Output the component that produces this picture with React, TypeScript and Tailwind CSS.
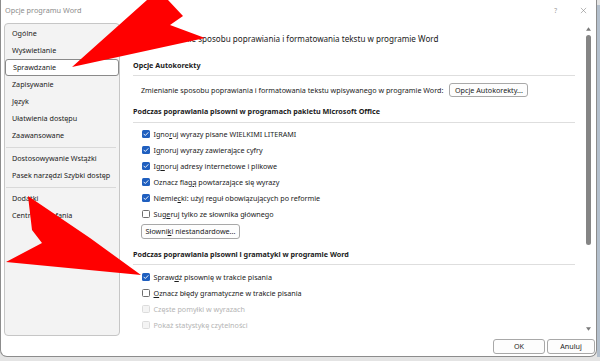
import React from "react";

function Check() {
  return (
    <svg viewBox="0 0 8 8" className="w-[8px] h-[8px]">
      <path d="M1.9 4.1 L3.3 5.5 L6.1 2.6" stroke="white" strokeWidth="0.9" fill="none" strokeLinecap="round" strokeLinejoin="round" />
    </svg>
  );
}

type Row = { pre: string; u?: string; post?: string; checked?: boolean; disabled?: boolean };

function CheckRow({ pre, u, post, checked, disabled }: Row) {
  return (
    <div className="flex items-center h-[16px] pl-[9px]">
      {checked ? (
        <div className="w-[8px] h-[8px] rounded-[1.5px] bg-[#1f5fbf] flex items-center justify-center">
          <Check />
        </div>
      ) : disabled ? (
        <div className="w-[8px] h-[8px] rounded-[1.5px] border border-[#dcdcdc] bg-[#f4f4f4]" />
      ) : (
        <div className="w-[8px] h-[8px] rounded-[1.5px] border border-[#6f6f6f] bg-white" />
      )}
      <span className={`ml-[3.5px] text-[7.2px] leading-[10px] whitespace-nowrap ${disabled ? "text-[#b4b4b4]" : "text-[#1b1b1b]"}`}>
        {pre}
        {u ? <span className="underline underline-offset-[1px] decoration-[0.5px]">{u}</span> : null}
        {post}
      </span>
    </div>
  );
}

function NavItem({ label, selected }: { label: string; selected?: boolean }) {
  return (
    <div
      className={`h-[17px] flex items-center pl-[7px] text-[7.2px] whitespace-nowrap text-[#1b1b1b] ${
        selected ? "bg-white border border-[#8a8a8a] rounded-[3px] pl-[6px]" : ""
      }`}
    >
      {label}
    </div>
  );
}

function Sep() {
  return (
    <div className="h-[6px] flex items-center">
      <div className="h-px w-[110px] ml-[1px] bg-[#d9d9d9]" />
    </div>
  );
}

function Btn({ children, className }: { children: React.ReactNode; className?: string }) {
  return (
    <div
      className={`flex items-center justify-center border border-[#a8a8a8] rounded-[3px] bg-[#fdfdfd] text-[7.2px] text-[#1b1b1b] whitespace-nowrap ${className ?? ""}`}
    >
      {children}
    </div>
  );
}

function Heading({ children, mt }: { children: React.ReactNode; mt: string }) {
  return (
    <div className={mt}>
      <div className="h-[12px] flex items-center text-[7.2px] font-bold text-[#1b1b1b] whitespace-nowrap">{children}</div>
    </div>
  );
}

export default function App() {
  return (
    <div className="relative w-[600px] h-[361px] overflow-hidden bg-[#e4e4e4] font-['Noto_Sans',sans-serif]">
      <div className="absolute right-0 top-[5px] w-[3px] h-[352px] bg-[#b3bfcc]" />
      <div className="relative w-[597px] h-[357px] bg-white border-x border-b border-[#8c8c8c] rounded-b-[7px] flex flex-col">
        {/* title bar */}
        <div className="h-[21px] flex items-center justify-between pl-[4px] pr-[9px]">
          <span className="text-[7.3px] text-[#8c8c8c]">Opcje programu Word</span>
          <div className="flex items-center gap-[23px]">
            <span className="text-[6.5px] text-[#9a9a9a]">?</span>
            <svg viewBox="0 0 8 8" className="w-[7px] h-[7px]">
              <path d="M1 1 L7 7 M7 1 L1 7" stroke="#8a8a8a" strokeWidth="0.7" />
            </svg>
          </div>
        </div>

        {/* body */}
        <div className="flex h-[315px]">
          {/* nav */}
          <div className="ml-[3px] mt-[2px] w-[116px] h-[313px] border border-[#c6c6c6] rounded-[4px] bg-[#f3f3f3] pt-[1px]">
            <NavItem label="Ogólne" />
            <NavItem label="Wyświetlanie" />
            <NavItem label="Sprawdzanie" selected />
            <NavItem label="Zapisywanie" />
            <NavItem label="Język" />
            <NavItem label="Ułatwienia dostępu" />
            <NavItem label="Zaawansowane" />
            <Sep />
            <NavItem label="Dostosowywanie Wstążki" />
            <NavItem label="Pasek narzędzi Szybki dostęp" />
            <Sep />
            <NavItem label="Dodatki" />
            <NavItem label="Centrum zaufania" />
          </div>

          {/* content */}
          <div className="flex-1 flex">
            <div className="flex-1 pl-[13px] pr-[7px]">
              <div className="mt-[11px] h-[14px] flex items-center">
                <div className="w-[21px]" />
                <span className="text-[8.1px] text-[#1b1b1b] whitespace-nowrap">
                  Zmienianie sposobu poprawiania i formatowania tekstu w programie Word
                </span>
              </div>

              <Heading mt="mt-[13px]">Opcje Autokorekty</Heading>
              <div className="mt-[4px] h-px bg-[#dedede]" />
              <div className="mt-[7px] h-[14px] flex items-center pl-[8px]">
                <span className="text-[7.2px] text-[#1b1b1b] whitespace-nowrap">
                  Zmienianie sposobu poprawiania i formatowania tekstu wpisywanego w programie Word:
                </span>
                <Btn className="ml-[6px] h-[14px] w-[79px]">Opcje Autokorekty...</Btn>
              </div>

              <Heading mt="mt-[8px]">Podczas poprawiania pisowni w programach pakietu Microsoft Office</Heading>
              <div className="mt-[5px] h-px bg-[#dedede]" />
              <div className="mt-[3px]">
                <CheckRow checked pre="Igno" u="r" post="uj wyrazy pisane WIELKIMI LITERAMI" />
                <CheckRow checked pre="I" u="g" post="noruj wyrazy zawierające cyfry" />
                <CheckRow checked pre="Ig" u="n" post="oruj adresy internetowe i plikowe" />
                <CheckRow checked pre="Oznacz flag" u="ą" post=" powtarzające się wyrazy" />
                <CheckRow checked pre="Niemie" u="c" post="ki: użyj reguł obowiązujących po reformie" />
                <CheckRow pre="Sug" u="e" post="ruj tylko ze słownika głównego" />
              </div>
              <div className="mt-[2px] pl-[8px]">
                <Btn className="h-[15px] w-[99px]">
                  <span>
                    Słowni<span className="underline underline-offset-[1px] decoration-[0.5px]">k</span>i niestandardowe...
                  </span>
                </Btn>
              </div>

              <Heading mt="mt-[9px]">Podczas poprawiania pisowni i gramatyki w programie Word</Heading>
              <div className="mt-[4px] h-px bg-[#dedede]" />
              <div className="mt-[4px]">
                <CheckRow checked pre="Spraw" u="d" post="ź pisownię w trakcie pisania" />
                <CheckRow pre="" u="O" post="znacz błędy gramatyczne w trakcie pisania" />
                <CheckRow disabled pre="Częste pomyłki w wyrazach" />
                <CheckRow disabled pre="Pokaż statystykę czytelności" />
              </div>
            </div>

            {/* scrollbar */}
            <div className="w-[13px] mr-[1px] flex flex-col items-center pt-[6px]">
              <svg viewBox="0 0 6 4" className="w-[5px] h-[4px]">
                <path d="M0 4 L3 0 L6 4 Z" fill="#7a7a7a" />
              </svg>
              <div className="mt-[4px] w-[5px] h-[210px] rounded-full bg-[#858585]" />
              <div className="flex-1" />
              <svg viewBox="0 0 6 4" className="w-[5px] h-[4px] mb-[5px]">
                <path d="M0 0 L6 0 L3 4 Z" fill="#7a7a7a" />
              </svg>
            </div>
          </div>
        </div>

        {/* footer */}
        <div className="flex-1 flex justify-end items-start pt-[3px] pr-[1px] gap-[2px]">
          <Btn className="h-[15px] w-[52px]">OK</Btn>
          <Btn className="h-[15px] w-[48px]">Anuluj</Btn>
        </div>
      </div>

      {/* red arrows drawn over the screenshot */}
      <svg className="absolute inset-0 pointer-events-none" width="600" height="361" viewBox="0 0 600 361">
        <polygon points="72,67 147,0 168,0 183,16 170,25 205,38" fill="#ff0000" />
        <polygon points="28,196 90,238 141,275 6,262 42,243 32,230" fill="#ff0000" />
      </svg>
    </div>
  );
}
